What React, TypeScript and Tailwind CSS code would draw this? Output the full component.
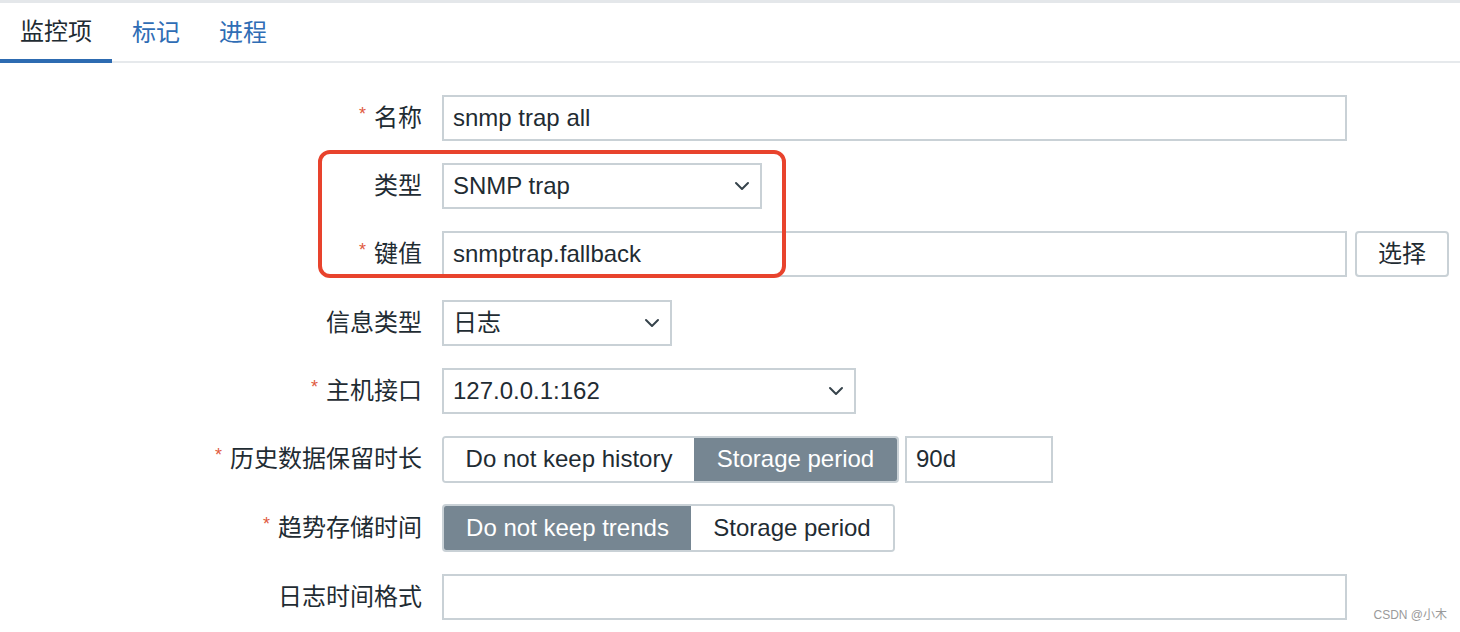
import { ReactNode } from 'react';

const font = { fontFamily: '"Liberation Sans", "Noto Sans CJK SC", Arial, sans-serif' };

function Chevron() {
  return (
    <svg width="16" height="10" viewBox="0 0 16 10" className="shrink-0">
      <polyline points="2,2 8,8 14,2" fill="none" stroke="#36434b" strokeWidth="2" strokeLinecap="round" strokeLinejoin="round" />
    </svg>
  );
}

function Row({ label, required, children, h = 'h-[46px]' }: { label: string; required?: boolean; children: ReactNode; h?: string }) {
  return (
    <div className={`flex items-center ${h}`}>
      <div className="w-[422px] shrink-0 flex justify-end items-center text-[24px] text-[#1f2c33]">
        {required && <span className="text-[#df5a3e] text-[18px] mr-[8px] relative -top-[4px]">*</span>}
        <span>{label}</span>
      </div>
      <div className="ml-[20px] flex items-center h-full">{children}</div>
    </div>
  );
}

function TextBox({ value, w }: { value: string; w: string }) {
  return (
    <div className={`${w} h-[46px] border-2 border-[#c9d1d6] bg-white flex items-center pl-[9px] text-[24px] text-[#1f2c33]`}>
      {value}
    </div>
  );
}

function SelectBox({ value, w }: { value: string; w: string }) {
  return (
    <div className={`${w} h-[46px] border-2 border-[#c9d1d6] bg-white flex items-center justify-between pl-[9px] pr-[10px] text-[24px] text-[#1f2c33]`}>
      <span>{value}</span>
      <Chevron />
    </div>
  );
}

function Segmented({ items, active, widths, h }: { items: string[]; active: number; widths: string[]; h: string }) {
  return (
    <div className={`flex ${h} border-2 border-[#c9d1d6] rounded-[4px] overflow-hidden text-[24px]`}>
      {items.map((t, i) => (
        <div
          key={t}
          className={`${widths[i]} flex items-center justify-center ${i === active ? 'bg-[#768692] text-white' : 'bg-white text-[#1f2c33]'}`}
        >
          {t}
        </div>
      ))}
    </div>
  );
}

export default function App() {
  return (
    <div className="relative w-[1460px] h-[632px] bg-white border-t-[3px] border-[#e4e7ea] overflow-hidden" style={font}>
      {/* Tabs */}
      <div className="flex border-b-2 border-[#e6e9ec] h-[60px]">
        <div className="px-5 h-[60px] flex items-center text-[24px] text-[#1f2c33] border-b-4 border-[#2d6bb1] pt-[2px]">监控项</div>
        <div className="px-5 h-[58px] flex items-center text-[24px] text-[#2f6db5] pt-[2px]">标记</div>
        <div className="pl-[19px] pr-5 h-[58px] flex items-center text-[24px] text-[#2f6db5] pt-[2px]">进程</div>
      </div>

      {/* Form */}
      <div className="flex flex-col gap-[22px] pt-[32px]">
        <Row label="名称" required>
          <TextBox value="snmp trap all" w="w-[905px]" />
        </Row>
        <Row label="类型">
          <SelectBox value="SNMP trap" w="w-[320px]" />
        </Row>
        <Row label="键值" required>
          <TextBox value="snmptrap.fallback" w="w-[905px]" />
          <div className="ml-[8px] w-[94px] h-[46px] border-2 border-[#c9d1d6] rounded-[4px] bg-white flex items-center justify-center text-[24px] text-[#1f2c33]">
            选择
          </div>
        </Row>
        <Row label="信息类型" h="h-[47px]">
          <SelectBox value="日志" w="w-[230px]" />
        </Row>
        <Row label="主机接口" required>
          <SelectBox value="127.0.0.1:162" w="w-[414px]" />
        </Row>
        <Row label="历史数据保留时长" required>
          <Segmented
            items={['Do not keep history', 'Storage period']}
            active={1}
            widths={['w-[250px]', 'w-[203px]']}
            h="h-[47px]"
          />
          <div className="ml-[6px] w-[148px] h-[47px] border-2 border-[#c9d1d6] bg-white flex items-center pl-[9px] text-[24px] text-[#1f2c33]">
            90d
          </div>
        </Row>
        <Row label="趋势存储时间" required h="h-[48px]">
          <Segmented
            items={['Do not keep trends', 'Storage period']}
            active={0}
            widths={['w-[247px]', 'w-[202px]']}
            h="h-[48px]"
          />
        </Row>
        <Row label="日志时间格式">
          <TextBox value="" w="w-[905px]" />
        </Row>
      </div>

      {/* Red annotation box */}
      <div className="absolute left-[318px] top-[147px] w-[468px] h-[128px] border-4 border-[#e8432d] rounded-[12px]" />

      {/* Watermark */}
      <div className="absolute right-[13px] bottom-[8px] text-[12px] text-[#9a9a9a]" style={font}>
        CSDN @小木
      </div>
    </div>
  );
}
